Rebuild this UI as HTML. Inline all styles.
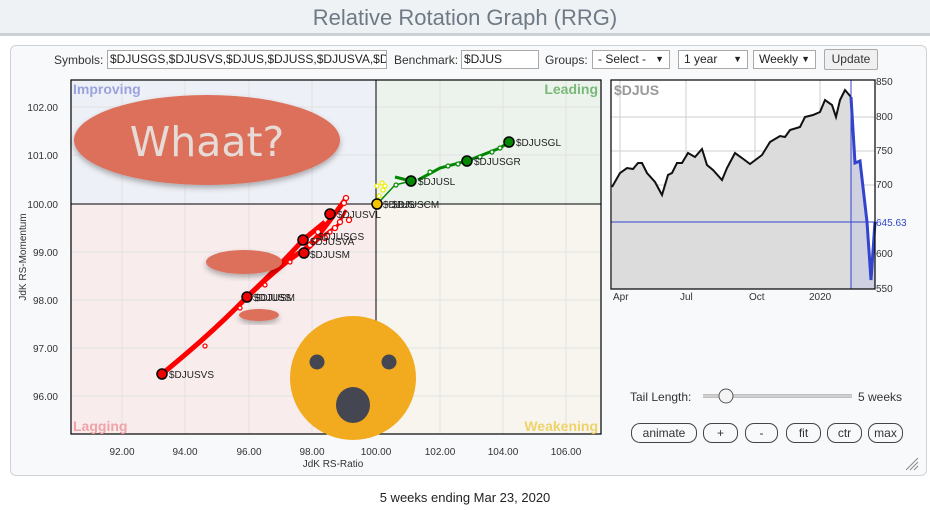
<!DOCTYPE html>
<html><head><meta charset="utf-8"><style>
*{margin:0;padding:0;box-sizing:border-box}
body{width:930px;height:510px;background:#fff;font-family:"Liberation Sans",Arial,sans-serif;position:relative;overflow:hidden;font-size:12px;color:#333}
.hdr{position:absolute;left:0;top:0;width:930px;height:36px;background:#eef2f5;border-bottom:3px solid #c9d1d7;text-align:center;font-size:22px;color:#6f7a85;line-height:35px;font-family:"Liberation Sans Narrow","Liberation Sans",sans-serif}
.panel{position:absolute;left:10px;top:45px;width:917px;height:431px;border:1px solid #cfd3d6;border-radius:6px;background:#f8f9fa}
.a{position:absolute;white-space:nowrap}
.inp{position:absolute;height:19px;border:1px solid #a9a9a9;background:#fff;font-size:12px;line-height:17px;padding-left:2px;overflow:hidden;white-space:nowrap;color:#222}
.sel{position:absolute;height:19px;border:1px solid #a9a9a9;background:#fff;font-size:12px;line-height:17px;padding-left:5px;color:#222}
.sel span{position:absolute;right:5px;font-size:9px}
.btn{position:absolute;height:20px;border:1px solid #444;border-radius:9px;background:#f8f9fa;text-align:center;font-size:12px;line-height:18px;color:#333}
</style></head><body>
<div class="hdr">Relative Rotation Graph (RRG)</div>
<div class="panel"></div>
<div class="a" style="left:54px;top:53px">Symbols:</div>
<div class="inp" style="left:107px;top:50px;width:280px">$DJUSGS,$DJUSVS,$DJUS,$DJUSS,$DJUSVA,$DJUSVL</div>
<div class="a" style="left:394px;top:53px">Benchmark:</div>
<div class="inp" style="left:461px;top:50px;width:78px">$DJUS</div>
<div class="a" style="left:545px;top:53px">Groups:</div>
<div class="sel" style="left:592px;top:50px;width:78px">- Select -<span>▼</span></div>
<div class="sel" style="left:678px;top:50px;width:70px">1 year<span>▼</span></div>
<div class="sel" style="left:753px;top:50px;width:63px">Weekly<span>▼</span></div>
<div class="btn" style="left:824px;top:49px;width:54px;height:21px;border-radius:2px;border-color:#aaa;background:#f0f0f0;line-height:19px">Update</div>

<svg class="a" style="left:0;top:0" width="930" height="510" font-family="Liberation Sans, Arial, sans-serif">
<defs>
<filter id="sh" x="-20%" y="-20%" width="140%" height="150%"><feDropShadow dx="0" dy="3" stdDeviation="3" flood-color="#000" flood-opacity="0.3"/></filter>
</defs>
<rect x="71" y="80" width="305" height="124" fill="#eef0f7"/>
<rect x="376" y="80" width="225" height="124" fill="#ecf3ec"/>
<rect x="71" y="204" width="305" height="230" fill="#f8eced"/>
<rect x="376" y="204" width="225" height="230" fill="#f7f5ee"/>
<g stroke="#e2e2e2" stroke-width="1">
<line x1="122" y1="80" x2="122" y2="434"/><line x1="185" y1="80" x2="185" y2="434"/><line x1="249" y1="80" x2="249" y2="434"/><line x1="312" y1="80" x2="312" y2="434"/><line x1="440" y1="80" x2="440" y2="434"/><line x1="503" y1="80" x2="503" y2="434"/><line x1="566" y1="80" x2="566" y2="434"/>
<line x1="71" y1="107" x2="601" y2="107"/><line x1="71" y1="155" x2="601" y2="155"/><line x1="71" y1="252" x2="601" y2="252"/><line x1="71" y1="300" x2="601" y2="300"/><line x1="71" y1="348" x2="601" y2="348"/><line x1="71" y1="396" x2="601" y2="396"/>
</g>
<line x1="376" y1="80" x2="376" y2="434" stroke="#000"/>
<line x1="71" y1="204" x2="601" y2="204" stroke="#000"/>
<rect x="71" y="80" width="530" height="354" fill="none" stroke="#000" stroke-width="1.2"/>
<g font-size="14" font-weight="bold">
<text x="73" y="94" fill="#9aa3dd">Improving</text>
<text x="598" y="94" fill="#79b879" text-anchor="end">Leading</text>
<text x="73" y="431" fill="#eea3a8">Lagging</text>
<text x="598" y="431" fill="#eed36a" text-anchor="end">Weakening</text>
</g>
<g font-size="10" fill="#333" text-anchor="end">
<text x="58" y="111">102.00</text><text x="58" y="159">101.00</text><text x="58" y="208">100.00</text><text x="58" y="256">99.00</text><text x="58" y="304">98.00</text><text x="58" y="352">97.00</text><text x="58" y="400">96.00</text>
</g>
<g font-size="10" fill="#333" text-anchor="middle">
<text x="122" y="455">92.00</text><text x="185" y="455">94.00</text><text x="249" y="455">96.00</text><text x="312" y="455">98.00</text><text x="376" y="455">100.00</text><text x="440" y="455">102.00</text><text x="503" y="455">104.00</text><text x="566" y="455">106.00</text>
<text x="333" y="467">JdK RS-Ratio</text>
<text transform="translate(26,257) rotate(-90)">JdK RS-Momentum</text>
</g>
<path d="M162 374 C185 355 215 330 247 297 C270 275 290 258 304 250 C318 238 330 220 345 200" stroke="#f00" stroke-width="5" fill="none"/>
<path d="M247 297 C265 280 285 260 303 240 L325 222" stroke="#f00" stroke-width="5" fill="none"/>
<path d="M304 253 L320 238 L338 225 L346 210" stroke="#f00" stroke-width="3" fill="none"/>
<g fill="#fff" stroke="#f00" stroke-width="1.3">
<circle cx="205" cy="346" r="2"/><circle cx="240" cy="308" r="2"/><circle cx="265" cy="285" r="2"/><circle cx="290" cy="262" r="2"/><circle cx="310" cy="245" r="2.5"/><circle cx="318" cy="232" r="2.5"/><circle cx="325" cy="238" r="2.5"/><circle cx="335" cy="228" r="2.5"/><circle cx="340" cy="222" r="2.5"/><circle cx="344" cy="203" r="2.5"/><circle cx="346" cy="198" r="2.5"/><circle cx="349" cy="220" r="2.5"/><circle cx="315" cy="240" r="2"/><circle cx="330" cy="232" r="2"/>
</g>
<path d="M395 177 L411 181 M418 180 L440 168 L467 161 L500 148 L509 142" stroke="#080" stroke-width="3" fill="none"/>
<path d="M381 200 L395 185 L411 181" stroke="#080" stroke-width="1.5" fill="none"/>
<g fill="#fff" stroke="#080" stroke-width="1.2"><circle cx="396" cy="185" r="2"/><circle cx="430" cy="172" r="2"/><circle cx="448" cy="166" r="2"/><circle cx="458" cy="164" r="2"/><circle cx="480" cy="157" r="2"/><circle cx="492" cy="152" r="2"/><circle cx="500" cy="148" r="2"/></g>
<g fill="#fff" stroke="#ee0" stroke-width="1.2"><circle cx="377" cy="186" r="2"/><circle cx="382" cy="183" r="2"/><circle cx="385" cy="186" r="2"/><circle cx="383" cy="190" r="2"/><circle cx="379" cy="196" r="2"/></g>
<g stroke="#000" stroke-width="1.5">
<circle cx="162" cy="374" r="5" fill="#e00"/><circle cx="247" cy="297" r="5" fill="#e00"/><circle cx="304" cy="253" r="5" fill="#e00"/><circle cx="303" cy="240" r="5" fill="#e00"/><circle cx="330" cy="214" r="5" fill="#e00"/>
<circle cx="377" cy="204" r="5" fill="#f5c400"/>
<circle cx="411" cy="181" r="5" fill="#080"/><circle cx="467" cy="161" r="5" fill="#080"/><circle cx="509" cy="142" r="5" fill="#080"/>
</g>
<g font-size="10" fill="#222">
<text x="169" y="378">$DJUSVS</text><text x="253" y="301">$DJUSS</text><text x="255" y="301">$DJUSM</text>
<text x="310" y="258">$DJUSM</text><text x="310" y="245">$DJUSVA</text><text x="318" y="240">$DJUSGS</text><text x="337" y="218">$DJUSVL</text>
<text x="383" y="208">$DJUS</text><text x="392" y="208">$DJUSCM</text>
<text x="418" y="185">$DJUSL</text><text x="474" y="165">$DJUSGR</text><text x="516" y="146">$DJUSGL</text>
</g>
<ellipse cx="207" cy="140" rx="133" ry="45" fill="#dc705a" filter="url(#sh)"/>
<text x="207" y="156" font-size="41" fill="#e6dbd7" text-anchor="middle" font-family="DejaVu Sans, sans-serif">Whaat?</text>
<ellipse cx="244" cy="262" rx="38" ry="12" fill="#dc705a" filter="url(#sh)"/>
<ellipse cx="259" cy="315" rx="20" ry="6" fill="#dc705a" filter="url(#sh)"/>
<ellipse cx="353" cy="378" rx="63" ry="62" fill="#f2aa1f"/>
<circle cx="317" cy="362" r="7.5" fill="#444651"/><circle cx="389" cy="362" r="7.5" fill="#444651"/>
<ellipse cx="353" cy="405" rx="17" ry="18" fill="#444651"/>
<rect x="611" y="80" width="264" height="209" fill="#fff"/>
<g stroke="#cfcfcf"><line x1="620" y1="80" x2="620" y2="289"/><line x1="686" y1="80" x2="686" y2="289"/><line x1="755" y1="80" x2="755" y2="289"/><line x1="820" y1="80" x2="820" y2="289"/>
<line x1="611" y1="117" x2="875" y2="117"/><line x1="611" y1="151" x2="875" y2="151"/><line x1="611" y1="185" x2="875" y2="185"/><line x1="611" y1="254" x2="875" y2="254"/></g>
<path d="M612 187 L620 173 L627 168 L633 169 L638 163 L642 163 L647 173 L655 182 L662 195 L668 175 L672 173 L677 163 L682 163 L688 153 L695 157 L702 149 L707 165 L713 170 L722 180 L727 168 L735 153 L742 158 L750 164 L762 155 L770 142 L780 136 L785 137 L790 130 L800 127 L805 117 L813 115 L820 112 L825 100 L832 105 L836 117 L840 100 L845 90 L851 97 L851 289 L612 289Z" fill="#dcdcdc"/>
<path d="M851 97 L855 163 L860 161 L867 222 L871 280 L875 222 L875 289 L851 289Z" fill="#cfd0e0"/>
<path d="M612 187 L620 173 L627 168 L633 169 L638 163 L642 163 L647 173 L655 182 L662 195 L668 175 L672 173 L677 163 L682 163 L688 153 L695 157 L702 149 L707 165 L713 170 L722 180 L727 168 L735 153 L742 158 L750 164 L762 155 L770 142 L780 136 L785 137 L790 130 L800 127 L805 117 L813 115 L820 112 L825 100 L832 105 L836 117 L840 100 L845 90 L851 97" fill="none" stroke="#111" stroke-width="2"/>
<path d="M851 97 L855 163 L860 161 L867 222 L871 280 L875 222" fill="none" stroke="#3344cc" stroke-width="3"/>
<line x1="851" y1="80" x2="851" y2="289" stroke="#3344cc"/>
<line x1="611" y1="222" x2="875" y2="222" stroke="#3344cc"/>
<line x1="875" y1="80" x2="875" y2="289" stroke="#3344cc"/>
<rect x="611" y="80" width="264" height="209" fill="none" stroke="#000" stroke-width="1.2"/>
<text x="614" y="95" font-size="14" font-weight="bold" fill="#999">$DJUS</text>
<g font-size="10" fill="#333"><text x="876" y="85">850</text><text x="876" y="120">800</text><text x="876" y="154">750</text><text x="876" y="188">700</text><text x="876" y="257">600</text><text x="876" y="292">550</text><text x="876" y="226" fill="#3344cc">645.63</text>
<text x="613" y="300">Apr</text><text x="680" y="300">Jul</text><text x="749" y="300">Oct</text><text x="809" y="300">2020</text></g>
<line x1="703" y1="396" x2="852" y2="396" stroke="#888" stroke-width="3"/>
<line x1="703" y1="396" x2="852" y2="396" stroke="#e8e8e8" stroke-width="1.5"/>
<circle cx="726" cy="396" r="7" fill="#f4f4f4" stroke="#555"/>
<g stroke="#888" stroke-width="1"><line x1="906" y1="470" x2="918" y2="458"/><line x1="910" y1="470" x2="918" y2="462"/><line x1="914" y1="470" x2="918" y2="466"/></g>
</svg>
<div class="a" style="left:630px;top:390px">Tail Length:</div>
<div class="a" style="left:858px;top:390px">5 weeks</div>
<div class="btn" style="left:631px;top:423px;width:66px">animate</div>
<div class="btn" style="left:703px;top:423px;width:35px">+</div>
<div class="btn" style="left:745px;top:423px;width:33px">-</div>
<div class="btn" style="left:786px;top:423px;width:35px">fit</div>
<div class="btn" style="left:827px;top:423px;width:35px">ctr</div>
<div class="btn" style="left:868px;top:423px;width:35px">max</div>
<div class="a" style="left:0;width:930px;text-align:center;top:490px;font-size:13px;color:#222">5 weeks ending Mar 23, 2020</div>
</body></html>
